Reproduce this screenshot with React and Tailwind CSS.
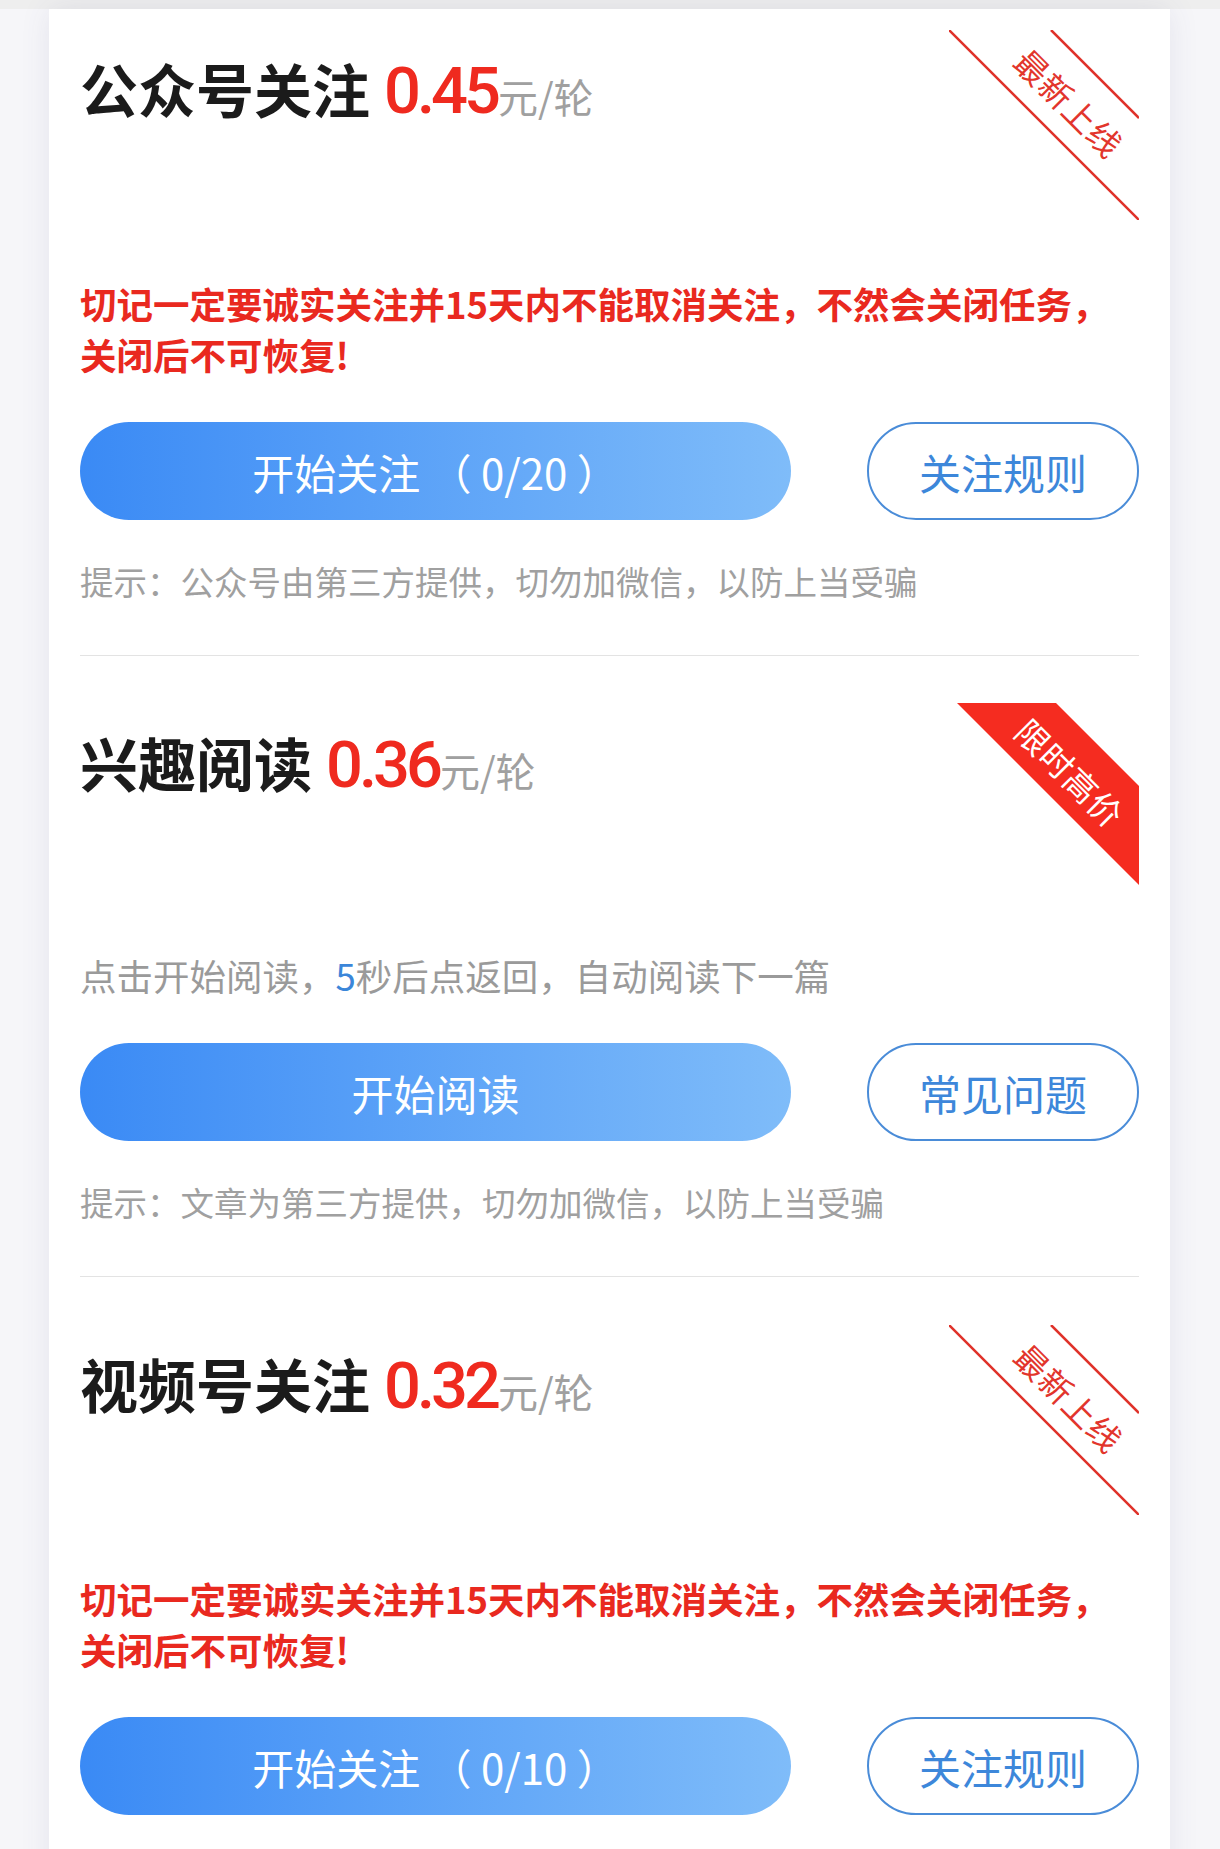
import React from "react";

const tasks = [
  {
    title: "公众号关注",
    price: "0.45",
    badge: "new",
    kind: "warn",
    primary: "开始关注 （ 0/20 ）",
    secondary: "关注规则",
    hint: "提示：公众号由第三方提供，切勿加微信，以防上当受骗",
  },
  {
    title: "兴趣阅读",
    price: "0.36",
    badge: "hot",
    kind: "read",
    primary: "开始阅读",
    secondary: "常见问题",
    hint: "提示：文章为第三方提供，切勿加微信，以防上当受骗",
  },
  {
    title: "视频号关注",
    price: "0.32",
    badge: "new",
    kind: "warn",
    primary: "开始关注 （ 0/10 ）",
    secondary: "关注规则",
    hint: null,
  },
];

// corner ribbon: outlined red ("最新上线") or filled red ("限时高价")
const Ribbon = ({ filled }) => {
  if (filled) {
    return (
      <div className="pointer-events-none absolute right-0 top-[-27px] h-[182px] w-[182px]">
        <svg className="absolute inset-0" width="182" height="182" viewBox="0 0 182 182">
          <polygon points="0,0 99,0 182,83 182,182" fill="#f52c20" />
        </svg>
        <div className="absolute left-[113px] top-[70px] -translate-x-1/2 -translate-y-1/2 rotate-45 whitespace-nowrap text-[33px] leading-none tracking-[1px] text-white">
          限时高价
        </div>
      </div>
    );
  }
  return (
    <div className="pointer-events-none absolute right-0 top-[-26px] h-[190px] w-[190px]">
      <svg className="absolute inset-0" width="190" height="190" viewBox="0 0 190 190">
        <line x1="0" y1="0" x2="190" y2="190" stroke="#df3129" strokeWidth="2.5" />
        <line x1="102" y1="0" x2="190" y2="88" stroke="#df3129" strokeWidth="2.5" />
      </svg>
      <div className="absolute left-[120px] top-[73px] -translate-x-1/2 -translate-y-1/2 rotate-45 whitespace-nowrap text-[33px] leading-none tracking-[1px] text-[#e2352c]">
        最新上线
      </div>
    </div>
  );
};

const TaskSection = ({ task, first }) => (
  <div className={`relative ${first ? "pt-[47px]" : "pt-[74px]"}`}>
    {/* Title + price */}
    <div className="relative h-[64px] whitespace-nowrap leading-[64px]">
      <span className="text-[58px] font-bold text-[#1b1b1b]">{task.title}</span>
      <span className="ml-[14px] font-['Roboto',sans-serif] text-[65px] font-medium tracking-[-4px] text-[#ef2a1f]">
        {task.price}
      </span>
      <span className="ml-[1px] text-[40px] text-[#a0a0a0]">元/轮</span>
      <Ribbon filled={task.badge === "hot"} />
    </div>

    {/* Description */}
    {task.kind === "warn" ? (
      <p className="mt-[158px] text-[36.5px] font-bold leading-[51px] text-[#e9291f]">
        切记一定要诚实关注并15天内不能取消关注，不然会关闭任务，
        <br />
        关闭后不可恢复!
      </p>
    ) : (
      <p className="mt-[156px] text-[36.5px] leading-[51px] text-[#9a9a9a]">
        点击开始阅读，<span className="text-[#3b86d9]">5</span>秒后点返回，自动阅读下一篇
      </p>
    )}

    {/* Buttons */}
    <div className="mt-[42px] flex items-center justify-between">
      <button className="flex h-[98px] w-[711px] items-center justify-center whitespace-pre rounded-full bg-gradient-to-r from-[#3a8af5] to-[#7fbcf9] text-[42px] text-white">
        {task.primary}
      </button>
      <button className="flex h-[98px] w-[272px] items-center justify-center rounded-full border-[2.5px] border-[#4a8cd8] text-[42px] text-[#3d87da]">
        {task.secondary}
      </button>
    </div>

    {/* Hint */}
    {task.hint && (
      <>
        <p className="mt-[39px] text-[33.5px] leading-[44px] text-[#a0a0a0]">{task.hint}</p>
        <div className="mt-[52px] h-px bg-[#e3e3e3]" />
      </>
    )}
  </div>
);

export default function App() {
  return (
    <div className="h-[1849px] overflow-hidden bg-[#f6f6f9] font-['Noto_Sans_CJK_SC',sans-serif]">
      <div className="h-[9px] bg-[#eeeeee]" />
      <div className="ml-[49px] mr-[50px] min-h-[1900px] bg-white px-[31px] shadow-[0_0_28px_rgba(70,70,130,0.10)]">
        {tasks.map((task, i) => (
          <TaskSection key={i} task={task} first={i === 0} />
        ))}
      </div>
    </div>
  );
}
